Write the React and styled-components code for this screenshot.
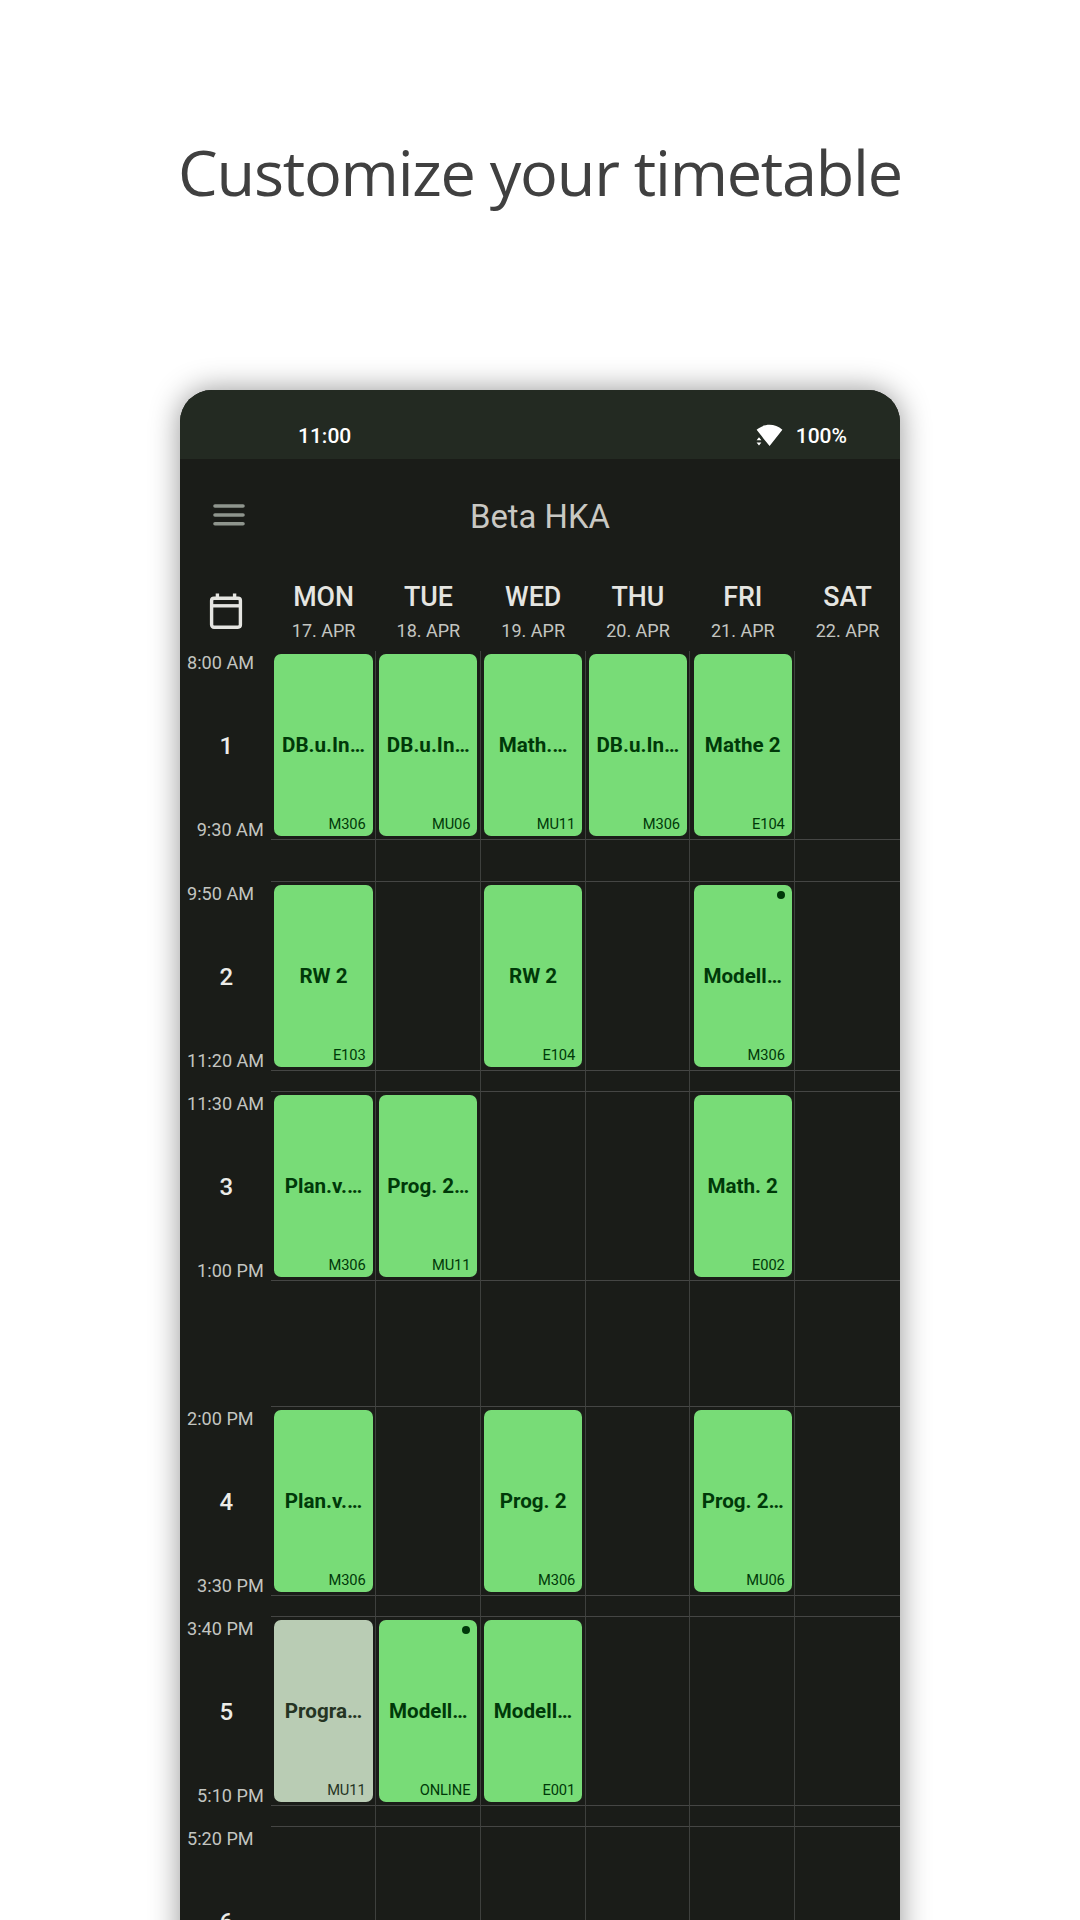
import React from "react";
import styled, { createGlobalStyle } from "styled-components";

const Global = createGlobalStyle`
  * { box-sizing: border-box; }
  html, body { margin: 0; background: #fff; }
  body { width: 1080px; height: 1920px; overflow: hidden; }
`;

const Page = styled.main`
  width: 1080px;
  height: 1920px;
  overflow: hidden;
  display: flex;
  flex-direction: column;
  align-items: center;
  font-family: Roboto, "Liberation Sans", sans-serif;
  background: #fff;
`;

const Headline = styled.h1`
  margin: 0;
  flex: none;
  height: 390px;
  padding-top: 127px;
  font: 400 63px/90px "Open Sans", "Noto Sans", sans-serif;
  letter-spacing: -1.25px;
  color: #404040;
  white-space: nowrap;
`;

const Phone = styled.section`
  width: 720px;
  height: 1600px;
  flex: none;
  border-radius: 32px 32px 0 0;
  background: #1a1c18;
  box-shadow: 0 0 30px rgba(0, 0, 0, 0.42);
  overflow: hidden;
`;

const StatusBar = styled.header`
  height: 69px;
  padding: 34px 53px 0 118px;
  display: flex;
  justify-content: space-between;
  background: #232a22;
  color: #fff;
  font-size: 21px;
  line-height: 25px;
  font-weight: 500;
`;

const StatusIcons = styled.div`
  display: flex;
  gap: 13px;
`;

const AppBar = styled.div`
  height: 122px;
  padding: 0 0 10px 33px;
  display: grid;
  grid-template-columns: 60px 534px;
  align-items: center;
`;

const Title = styled.h2`
  margin: 4px 0 0;
  font-size: 32.8px;
  font-weight: 400;
  line-height: 40px;
  text-align: center;
  color: #c9c8c3;
`;

const Days = styled.div`
  height: 70px;
  display: grid;
  grid-template-columns: 91.2px repeat(6, 104.8px);
`;

const CalendarCell = styled.div`
  padding: 11px 0 0 28px;
`;

const Day = styled.div`
  padding-top: 1px;
  display: flex;
  flex-direction: column;
  align-items: center;
  color: #c3c5c0;
`;

const DayName = styled.strong`
  font-size: 26.8px;
  font-weight: 500;
  line-height: 30px;
  color: #e5e5e1;
`;

const DayDate = styled.span`
  margin-top: 8px;
  font-size: 18px;
  line-height: 21px;
`;

const Schedule = styled.div`
  display: flex;
  flex-direction: column;
`;

const Period = styled.div`
  height: 189px;
  display: grid;
  grid-template-columns: 91.2px repeat(6, 104.8px);
`;

const Gap = styled(Period)`
  height: ${(p) => p.$minutes * 2.1}px;
`;

const TimeCell = styled.div`
  padding: 1px 7.5px 0 7px;
  display: flex;
  flex-direction: column;
  justify-content: space-between;
  font-size: 18.1px;
  line-height: 22px;
  color: #c3c5c0;
`;

const Start = styled.span`
  white-space: nowrap;
`;

const End = styled(Start)`
  margin-bottom: -1px;
  text-align: right;
`;

const Index = styled.span`
  margin-top: -1px;
  padding-left: 2px;
  text-align: center;
  font-size: 24px;
  font-weight: 500;
  line-height: 28px;
  color: #ecece8;
`;

const Slot = styled.div`
  padding: 3px 2.4px 3px 3.2px;
  border-bottom: 1px solid #454644;
  border-right: ${(p) => (p.$last ? "0" : "1px solid #3e403d")};
`;

const Lesson = styled.article`
  height: 100%;
  position: relative;
  padding: 2px 7px 3px;
  display: grid;
  grid-template-columns: 100%;
  grid-template-rows: 1fr auto 1fr;
  border-radius: 7px;
  background: ${(p) => (p.$muted ? "#b9ccb4" : "#78dc77")};
  color: ${(p) => (p.$muted ? "#253423" : "#003909")};
`;

const Subject = styled.b`
  grid-row: 2;
  justify-self: center;
  font-size: 20.6px;
  font-weight: 700;
  line-height: 24px;
  white-space: nowrap;
`;

const Room = styled.span`
  grid-row: 3;
  align-self: end;
  text-align: right;
  font-size: 14.7px;
  letter-spacing: -0.1px;
  line-height: 18px;
`;

const Mark = styled.i`
  position: absolute;
  top: 6px;
  right: 7px;
  width: 8px;
  height: 8px;
  border-radius: 50%;
  background: currentColor;
`;

const days = [
  ["MON", "17. APR"],
  ["TUE", "18. APR"],
  ["WED", "19. APR"],
  ["THU", "20. APR"],
  ["FRI", "21. APR"],
  ["SAT", "22. APR"],
];

const periods = [
  {
    start: "8:00 AM", end: "9:30 AM", pause: 20,
    lessons: [
      { name: "DB.u.In…", room: "M306" },
      { name: "DB.u.In…", room: "MU06" },
      { name: "Math.…", room: "MU11" },
      { name: "DB.u.In…", room: "M306" },
      { name: "Mathe 2", room: "E104" },
      null,
    ],
  },
  {
    start: "9:50 AM", end: "11:20 AM", pause: 10,
    lessons: [
      { name: "RW 2", room: "E103" },
      null,
      { name: "RW 2", room: "E104" },
      null,
      { name: "Modell…", room: "M306", mark: true },
      null,
    ],
  },
  {
    start: "11:30 AM", end: "1:00 PM", pause: 60,
    lessons: [
      { name: "Plan.v.…", room: "M306" },
      { name: "Prog. 2…", room: "MU11" },
      null,
      null,
      { name: "Math. 2", room: "E002" },
      null,
    ],
  },
  {
    start: "2:00 PM", end: "3:30 PM", pause: 10,
    lessons: [
      { name: "Plan.v.…", room: "M306" },
      null,
      { name: "Prog. 2", room: "M306" },
      null,
      { name: "Prog. 2…", room: "MU06" },
      null,
    ],
  },
  {
    start: "3:40 PM", end: "5:10 PM", pause: 10,
    lessons: [
      { name: "Progra…", room: "MU11", muted: true },
      { name: "Modell…", room: "ONLINE", mark: true },
      { name: "Modell…", room: "E001" },
      null,
      null,
      null,
    ],
  },
  { start: "5:20 PM", end: "", pause: 0, lessons: [null, null, null, null, null, null] },
];

const WifiIcon = () => (
  <svg width="27" height="23" viewBox="0 0 27 23" fill="#fff">
    <path d="M0.6 5.8C8-0.8 19-0.8 26.4 5.8L13.6 22L7.4 14.6L5.6 12Z" />
    <path d="M0.6 16.2L3 13.2L5.4 16.2ZM0.6 18.4H5.4L3 21.4Z" />
  </svg>
);

const MenuIcon = () => (
  <svg width="32" height="22" viewBox="0 0 32 22" stroke="#8f958d" strokeWidth="3.6" strokeLinecap="round">
    <path d="M2 2H30M2 11H30M2 19.8H30" />
  </svg>
);

const CalendarIcon = () => (
  <svg width="36" height="38" viewBox="0 0 36 38" fill="none" stroke="#e5e5e1" strokeWidth="3.4">
    <rect x="3.6" y="6.2" width="28.8" height="29" rx="2.4" />
    <path d="M3.6 13.8H32.4" />
    <path d="M9.4 1.6V6M26.6 1.6V6" />
  </svg>
);

export default function App() {
  return (
    <Page>
      <Global />
      <Headline>Customize your timetable</Headline>
      <Phone>
        <StatusBar>
          <span>11:00</span>
          <StatusIcons>
            <WifiIcon />
            <span>100%</span>
          </StatusIcons>
        </StatusBar>
        <AppBar>
          <MenuIcon />
          <Title>Beta HKA</Title>
        </AppBar>
        <Days>
          <CalendarCell>
            <CalendarIcon />
          </CalendarCell>
          {days.map(([name, date]) => (
            <Day key={name}>
              <DayName>{name}</DayName>
              <DayDate>{date}</DayDate>
            </Day>
          ))}
        </Days>
        <Schedule>
          {periods.map((period, i) => (
            <React.Fragment key={period.start}>
              <Period>
                <TimeCell>
                  <Start>{period.start}</Start>
                  <Index>{i + 1}</Index>
                  <End>{period.end || "\u00a0"}</End>
                </TimeCell>
                {period.lessons.map((lesson, d) => (
                  <Slot key={d} $last={d === 5}>
                    {lesson && (
                      <Lesson $muted={lesson.muted}>
                        {lesson.mark && <Mark />}
                        <Subject>{lesson.name}</Subject>
                        <Room>{lesson.room}</Room>
                      </Lesson>
                    )}
                  </Slot>
                ))}
              </Period>
              {period.pause > 0 && (
                <Gap $minutes={period.pause}>
                  <span />
                  {days.map(([name], d) => (
                    <Slot key={name} $last={d === 5} />
                  ))}
                </Gap>
              )}
            </React.Fragment>
          ))}
        </Schedule>
      </Phone>
    </Page>
  );
}
